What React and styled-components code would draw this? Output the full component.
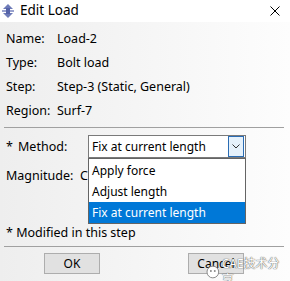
import React from 'react';
import styled, {createGlobalStyle} from 'styled-components';

const Global = createGlobalStyle`
  html, body {
    margin: 0;
    padding: 0;
    background: #fff;
  }
  body {
    font-family: "Noto Sans", "Noto Sans CJK SC", sans-serif;
    font-size: 12.5px;
    color: #000;
  }
`;

const Window = styled.div`
  position: relative;
  width: 290px;
  height: 281px;
  display: flex;
  flex-direction: column;
  overflow: hidden;
`;

const TitleBar = styled.div`
  height: 22px;
  flex: none;
  background: #fff;
  display: flex;
  align-items: center;
  padding: 0 10px 0 2px;
  gap: 6px;
`;

const Title = styled.span`
  flex: 1;
  font-size: 13.5px;
  line-height: 1;
`;

const Body = styled.div`
  flex: 1;
  background: linear-gradient(to right, #eeeeee, #fdfdfd);
  padding: 4px 6px 0 6px;
  display: flex;
  flex-direction: column;
`;

const InfoRow = styled.div`
  display: flex;
  height: 24px;
  align-items: center;
`;

const Label = styled.span`
  width: ${({w}) => w || 51}px;
  flex: none;
`;

const Divider = styled.div`
  height: 1px;
  background: #a0a0a0;
  margin: ${({m}) => m};
  width: 280px;
  flex: none;
`;

const FieldRow = styled.div`
  display: flex;
  align-items: center;
  height: ${({h}) => h}px;
  margin-top: ${({mt}) => mt || 0}px;
  flex: none;
`;

const Star = styled.span`
  width: 12px;
  flex: none;
`;

const SelectWrap = styled.div`
  position: relative;
  font-size: 12px;
`;

const Select = styled.div`
  width: 156px;
  height: 21px;
  border: 1px solid #7a7a7a;
  background: #fff;
  display: flex;
  align-items: center;
  box-sizing: content-box;
`;

const SelectText = styled.span`
  flex: 1;
  padding-left: 3px;
`;

const ArrowBox = styled.div`
  width: 14px;
  height: 19px;
  margin-right: 1px;
  border: 1px solid #2b6cb3;
  background: #e5f1fb;
  display: flex;
  align-items: center;
  justify-content: center;
`;

const List = styled.div`
  position: absolute;
  left: 0;
  top: 23px;
  width: 156px;
  padding-top: 1px;
  border: 1px solid #646464;
  background: #fff;
  z-index: 2;
`;

const Option = styled.div`
  height: 21px;
  line-height: 21px;
  padding-left: 3px;
  background: ${({active}) => (active ? '#0078d7' : 'transparent')};
  color: ${({active}) => (active ? '#fff' : '#000')};
`;

const Note = styled.div`
  margin-top: 31px;
  height: 20px;
  line-height: 20px;
  flex: none;
`;

const Buttons = styled.div`
  display: flex;
  gap: 88px;
  padding-left: 38px;
  margin-top: 6px;
  font-size: 12px;
`;

const Button = styled.div`
  width: 54px;
  height: 19px;
  border: 1px solid #adadad;
  background: #e1e1e1;
  display: flex;
  align-items: center;
  justify-content: center;
`;

const Watermark = styled.div`
  position: absolute;
  left: 206px;
  top: 256px;
  display: flex;
  align-items: center;
  gap: 2px;
  line-height: 16px;
  color: #fff;
  font-size: 12px;
  text-shadow: 0 0 1px #555, 0 0 1px #555;
  z-index: 3;
`;

const AppIcon = () => (
  <svg width="12" height="14" viewBox="0 0 12 14">
    <polygon points="6,0 11,5 1,5" fill="#6d7bb8" />
    <polygon points="6,14 11,9 1,9" fill="#6d7bb8" />
    <rect x="0" y="6" width="12" height="2" fill="#9aa3cf" />
    <rect x="4" y="4" width="4" height="6" fill="#5563a8" />
  </svg>
);

const CloseIcon = () => (
  <svg width="10" height="10" viewBox="0 0 10 10">
    <path d="M0.5 0.5 L9.5 9.5 M9.5 0.5 L0.5 9.5" stroke="#000" strokeWidth="1" />
  </svg>
);

const Chevron = () => (
  <svg width="8" height="5" viewBox="0 0 8 5">
    <path d="M0.5 0.5 L4 4 L7.5 0.5" stroke="#333" strokeWidth="1" fill="none" />
  </svg>
);

const info = [
  ['Name:', 'Load-2'],
  ['Type:', 'Bolt load'],
  ['Step:', 'Step-3 (Static, General)'],
  ['Region:', 'Surf-7'],
];

const options = ['Apply force', 'Adjust length', 'Fix at current length'];

export default function App() {
  return (
    <Window>
      <Global />
      <TitleBar>
        <AppIcon />
        <Title>Edit Load</Title>
        <CloseIcon />
      </TitleBar>
      <Body>
        {info.map(([k, v]) => (
          <InfoRow key={k}>
            <Label>{k}</Label>
            <span>{v}</span>
          </InfoRow>
        ))}
        <Divider m="5px 0 0 -2px" />
        <FieldRow h={24} mt={6}>
          <Star>*</Star>
          <Label w={70}>Method:</Label>
          <SelectWrap>
            <Select>
              <SelectText>Fix at current length</SelectText>
              <ArrowBox>
                <Chevron />
              </ArrowBox>
            </Select>
            <List>
              {options.map((o, i) => (
                <Option key={o} active={i === options.length - 1}>
                  {o}
                </Option>
              ))}
            </List>
          </SelectWrap>
        </FieldRow>
        <FieldRow h={34}>
          <Label w={74}>Magnitude:</Label>
          <span>C</span>
        </FieldRow>
        <Note>* Modified in this step</Note>
        <Divider m="3px 0 0 -2px" />
        <Buttons>
          <Button>OK</Button>
          <Button>Cancel</Button>
        </Buttons>
      </Body>
      <Watermark>
        <svg width="14" height="14" viewBox="0 0 14 14">
          <circle cx="7" cy="7" r="6" fill="#fff" stroke="#888" />
          <circle cx="5" cy="6" r="1" fill="#888" />
          <circle cx="9" cy="6" r="1" fill="#888" />
        </svg>
        <span>CAE技术分享</span>
      </Watermark>
    </Window>
  );
}
